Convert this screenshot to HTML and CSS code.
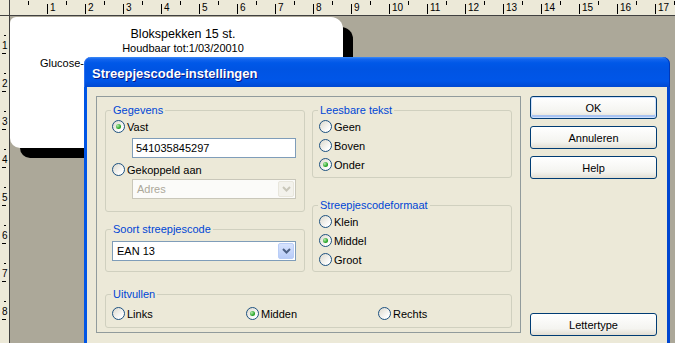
FILE: index.html
```html
<!DOCTYPE html>
<html lang="nl">

<head>
    <meta charset="UTF-8">
    <title>Streepjescode-instellingen</title>
    <link rel="stylesheet" href="styles.css">
</head>

<body>
    <div class="workspace">
        <div class="corner"></div>

        <div class="hruler">
            <div class="hcell first"></div>
            <div class="hcell"><span class="tick"></span><span class="num">1</span></div>
            <div class="hcell"><span class="tick"></span><span class="num">2</span></div>
            <div class="hcell"><span class="tick"></span><span class="num">3</span></div>
            <div class="hcell"><span class="tick"></span><span class="num">4</span></div>
            <div class="hcell"><span class="tick"></span><span class="num">5</span></div>
            <div class="hcell"><span class="tick"></span><span class="num">6</span></div>
            <div class="hcell"><span class="tick"></span><span class="num">7</span></div>
            <div class="hcell"><span class="tick"></span><span class="num">8</span></div>
            <div class="hcell"><span class="tick"></span><span class="num">9</span></div>
            <div class="hcell"><span class="tick"></span><span class="num">10</span></div>
            <div class="hcell"><span class="tick"></span><span class="num">11</span></div>
            <div class="hcell"><span class="tick"></span><span class="num">12</span></div>
            <div class="hcell"><span class="tick"></span><span class="num">13</span></div>
            <div class="hcell"><span class="tick"></span><span class="num">14</span></div>
            <div class="hcell"><span class="tick"></span><span class="num">15</span></div>
            <div class="hcell"><span class="tick"></span><span class="num">16</span></div>
            <div class="hcell"><span class="tick"></span><span class="num">17</span></div>
        </div>

        <div class="vruler">
            <div class="vcell"><span class="num">1</span></div>
            <div class="vcell"><span class="num">2</span></div>
            <div class="vcell"><span class="num">3</span></div>
            <div class="vcell"><span class="num">4</span></div>
            <div class="vcell"><span class="num">5</span></div>
            <div class="vcell"><span class="num">6</span></div>
            <div class="vcell"><span class="num">7</span></div>
            <div class="vcell"><span class="num">8</span></div>
        </div>

        <div class="canvas">
            <div class="label-card">
                <div class="label-title">Blokspekken 15 st.</div>
                <div class="label-sub">Houdbaar tot:1/03/20010</div>
                <div class="label-line">Glucose-</div>
            </div>
        </div>
    </div>

    <!-- dialog floats over the label canvas -->
    <div class="dialog">
        <div class="titlebar">Streepjescode-instellingen</div>

        <div class="dialog-body">
            <div class="panel">
                <div class="panel-top">
                    <div class="column">
                        <div class="group gegevens">
                            <div class="group-title">Gegevens</div>
                            <div class="option"><span class="radio on"></span>Vast</div>
                            <div class="textbox">541035845297</div>
                            <div class="option"><span class="radio"></span>Gekoppeld aan</div>
                            <div class="combo disabled">
                                <span class="combo-text">Adres</span>
                                <span class="combo-btn">
                                    <svg width="9" height="6" viewBox="0 0 9 6"><path d="M1 1l3.5 3.5L8 1" fill="none" stroke="#c9c7ba" stroke-width="2"/></svg>
                                </span>
                            </div>
                        </div>

                        <div class="group soort">
                            <div class="group-title">Soort streepjescode</div>
                            <div class="combo wide">
                                <span class="combo-text">EAN 13</span>
                                <span class="combo-btn">
                                    <svg width="9" height="6" viewBox="0 0 9 6"><path d="M1 1l3.5 3.5L8 1" fill="none" stroke="#4d6185" stroke-width="2"/></svg>
                                </span>
                            </div>
                        </div>
                    </div>

                    <div class="column">
                        <div class="group leesbaar">
                            <div class="group-title">Leesbare tekst</div>
                            <div class="option"><span class="radio"></span>Geen</div>
                            <div class="option"><span class="radio"></span>Boven</div>
                            <div class="option"><span class="radio on"></span>Onder</div>
                        </div>

                        <div class="group formaat">
                            <div class="group-title">Streepjescodeformaat</div>
                            <div class="option"><span class="radio"></span>Klein</div>
                            <div class="option"><span class="radio on"></span>Middel</div>
                            <div class="option"><span class="radio"></span>Groot</div>
                        </div>
                    </div>
                </div>

                <div class="group uitvullen">
                    <div class="group-title">Uitvullen</div>
                    <div class="option-row">
                        <div class="option"><span class="radio"></span>Links</div>
                        <div class="option"><span class="radio on"></span>Midden</div>
                        <div class="option"><span class="radio"></span>Rechts</div>
                    </div>
                </div>
            </div>

            <div class="buttons">
                <button class="btn default">OK</button>
                <button class="btn">Annuleren</button>
                <button class="btn">Help</button>
                <button class="btn font-btn">Lettertype</button>
            </div>
        </div>
    </div>
</body>

</html>
```

FILE: styles.css
```css
* {
    margin: 0;
    padding: 0;
    box-sizing: border-box;
}

body {
    width: 675px;
    height: 343px;
    overflow: hidden;
    position: relative;
    font-family: 'Liberation Sans', Arial, sans-serif;
    font-size: 11px;
    color: #000;
    background: #aca899;
}

/* rulers + canvas */
.workspace {
    display: grid;
    grid-template-columns: 10px 1fr;
    grid-template-rows: 16px 1fr;
    height: 343px;
}

.corner {
    background: #ece9d8;
    border-right: 1px solid #404040;
    border-bottom: 1px solid #404040;
}

.hruler {
    display: flex;
    overflow: hidden;
    background: #ece9d8;
    border-bottom: 1px solid #404040;
    font-size: 10px;
}

.hcell {
    position: relative;
    flex: none;
    width: 38px;
    height: 15px;
    display: flex;
    align-items: flex-end;
}

.hcell.first {
    width: 37px;
}

.hcell::after {
    content: '';
    position: absolute;
    left: 19px;
    top: 1px;
    width: 1px;
    height: 4px;
    background: #000;
}

.hcell.first::after {
    left: 18px;
}

.hcell .tick {
    width: 1px;
    height: 10px;
    margin-bottom: 1px;
    background: #000;
}

.hcell .num {
    margin-left: 2px;
    line-height: 12px;
    padding-bottom: 1px;
}

.vruler {
    overflow: hidden;
    background: #ece9d8;
    border-right: 1px solid #404040;
    font-size: 10px;
}

.vcell {
    position: relative;
    height: 38px;
    display: flex;
    align-items: flex-end;
    padding: 0 0 3px 2px;
}

.vcell::before,
.vcell::after {
    content: '';
    position: absolute;
    left: 2px;
    width: 4px;
    height: 1px;
    background: #000;
}

.vcell::before {
    top: 19px;
    left: 4px;
    width: 2px;
}

.vcell::after {
    bottom: 0;
}

.vcell .num {
    line-height: 11px;
}

.canvas {
    background: #aca899;
    overflow: hidden;
    padding-top: 1px;
}

.label-card {
    width: 333px;
    height: 131px;
    background: #fff;
    border-radius: 6px 12px 10px 10px;
    box-shadow: 10px 10px 0 #000;
    padding-top: 9px;
}

.label-title {
    padding-left: 13px;
    text-align: center;
    font-size: 12.5px;
    line-height: 16px;
}

.label-sub {
    padding-left: 13px;
    text-align: center;
    line-height: 13px;
}

.label-line {
    margin: 2px 0 0 30px;
    line-height: 13px;
}

/* dialog */
.dialog {
    position: absolute;
    left: 84px;
    top: 57px;
    width: 586px;
    height: 300px;
}

.titlebar {
    height: 30px;
    border-radius: 7px 7px 0 0;
    padding: 3px 0 0 8px;
    line-height: 27px;
    color: #fff;
    font-size: 13px;
    font-weight: bold;
    text-shadow: 1px 1px 0 #0a1883;
    background: linear-gradient(#3d8cf6 0, #1466ee 2px, #0058e8 6px, #0054e3 40%, #0056e8 80%, #0049d2 100%);
    box-shadow: inset 1px 0 0 #2a6ff0, inset -1px 0 0 #0038b8;
}

.dialog-body {
    display: flex;
    gap: 9px;
    height: 270px;
    padding: 9px 10px 0 9px;
    background: #ece9d8;
    border-left: 3px solid #0055e5;
    border-right: 3px solid #0046d0;
}

.panel {
    width: 425px;
    height: 237px;
    border: 1px solid #919b9c;
    padding: 13px 8px 4px;
}

.panel-top {
    display: grid;
    grid-template-columns: 200px 200px;
    gap: 7px;
    height: 162px;
    margin-bottom: 22px;
}

.column {
    display: flex;
    flex-direction: column;
    justify-content: space-between;
}

.group {
    border: 1px solid #d0d0bf;
    border-radius: 3px;
    padding: 0 6px;
}

.group-title {
    display: table;
    margin: -7px 0 0 -1px;
    padding: 0 2px;
    line-height: 13px;
    background: #ece9d8;
    color: #0046d5;
}

.gegevens {
    height: 102px;
}

.soort {
    height: 43px;
}

.leesbaar {
    height: 68px;
}

.formaat {
    height: 67px;
}

.uitvullen {
    height: 34px;
}

.option {
    display: flex;
    align-items: center;
    height: 19px;
}

.option-row {
    display: grid;
    grid-template-columns: 134px 132px 1fr;
    margin-top: 3px;
}

.radio {
    flex: none;
    width: 13px;
    height: 13px;
    margin-right: 2px;
    border: 1px solid #1c5180;
    border-radius: 50%;
    background: linear-gradient(135deg, #dcd9cd, #fff 80%);
    display: flex;
    align-items: center;
    justify-content: center;
}

.radio.on::after {
    content: '';
    width: 5px;
    height: 5px;
    border-radius: 50%;
    background: radial-gradient(circle at 35% 35%, #b4ecad, #21a121 65%);
}

.textbox {
    width: 164px;
    height: 20px;
    margin: 2px 0 2px 20px;
    padding-left: 3px;
    line-height: 18px;
    border: 1px solid #7f9db9;
    background: #fff;
}

.combo {
    display: flex;
    align-items: center;
    width: 164px;
    height: 20px;
    margin-left: 20px;
    padding: 1px;
    border: 1px solid #7f9db9;
    background: #fff;
}

.combo.wide {
    width: 184px;
    margin: 5px 0 0;
}

.combo.disabled {
    border-color: #c9c7ba;
    background: #fbfbf9;
    color: #aca899;
}

.combo-text {
    flex: 1;
    padding-left: 3px;
}

.combo-btn {
    width: 16px;
    height: 16px;
    display: flex;
    align-items: center;
    justify-content: center;
    border: 1px solid #b9cdf7;
    border-radius: 2px;
    background: linear-gradient(#d7e3fd, #b8ccf8);
}

.combo.disabled .combo-btn {
    border-color: #e8e6dc;
    background: #f3f2ec;
}

.buttons {
    display: flex;
    flex-direction: column;
    gap: 7px;
    width: 127px;
}

.btn {
    height: 23px;
    border: 1px solid #003c74;
    border-radius: 3px;
    background: linear-gradient(#fff, #f4f4f0 70%, #e2ded3);
    font-family: inherit;
    font-size: 11px;
    color: #000;
}

.btn.default {
    box-shadow: inset 0 0 0 1px #cee0fc, inset 0 -2px 0 1px #a8c3f2;
}

.font-btn {
    margin-top: 127px;
}
```
